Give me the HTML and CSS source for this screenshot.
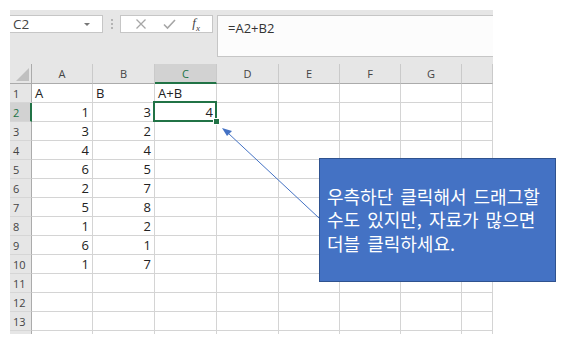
FILE: index.html
```html
<!DOCTYPE html>
<html lang="ko">
<head>
    <meta charset="UTF-8">
    <title>Excel fill handle</title>
    <link rel="stylesheet" href="styles.css">
</head>
<body>
<div class="page">
    <div class="excel">
        <div class="toolbar">
            <div class="namebox"><span>C2</span><span class="caret"></span></div>
            <div class="grip"><i></i><i></i><i></i></div>
            <div class="fxbox">
                <svg class="tool" width="12" height="12" viewBox="0 0 12 12"><path d="M1.5 1.5 L10.5 10.5 M10.5 1.5 L1.5 10.5" stroke="#a6a6a6" stroke-width="1.3"/></svg>
                <svg class="tool" width="13" height="12" viewBox="0 0 13 12"><path d="M1 6.5 L4.5 10 L12 2" stroke="#a6a6a6" stroke-width="1.6" fill="none"/></svg>
                <span class="fx">f<sub>x</sub></span>
            </div>
            <div class="formula">=A2+B2</div>
        </div>

        <div class="sheet">
            <div class="ch corner"></div>
            <div class="ch">A</div><div class="ch">B</div><div class="ch active">C</div><div class="ch">D</div>
            <div class="ch">E</div><div class="ch">F</div><div class="ch">G</div><div class="ch"></div>

            <div class="rh">1</div>
            <div class="c">A</div><div class="c">B</div><div class="c">A+B</div><div class="c"></div>
            <div class="c"></div><div class="c"></div><div class="c"></div><div class="c"></div>

            <div class="rh active">2</div>
            <div class="c num">1</div><div class="c num">3</div><div class="c num sel">4</div><div class="c"></div>
            <div class="c"></div><div class="c"></div><div class="c"></div><div class="c"></div>

            <div class="rh">3</div>
            <div class="c num">3</div><div class="c num">2</div><div class="c"></div><div class="c"></div>
            <div class="c"></div><div class="c"></div><div class="c"></div><div class="c"></div>

            <div class="rh">4</div>
            <div class="c num">4</div><div class="c num">4</div><div class="c"></div><div class="c"></div>
            <div class="c"></div><div class="c"></div><div class="c"></div><div class="c"></div>

            <div class="rh">5</div>
            <div class="c num">6</div><div class="c num">5</div><div class="c"></div><div class="c"></div>
            <div class="c"></div><div class="c"></div><div class="c"></div><div class="c"></div>

            <div class="rh">6</div>
            <div class="c num">2</div><div class="c num">7</div><div class="c"></div><div class="c"></div>
            <div class="c"></div><div class="c"></div><div class="c"></div><div class="c"></div>

            <div class="rh">7</div>
            <div class="c num">5</div><div class="c num">8</div><div class="c"></div><div class="c"></div>
            <div class="c"></div><div class="c"></div><div class="c"></div><div class="c"></div>

            <div class="rh">8</div>
            <div class="c num">1</div><div class="c num">2</div><div class="c"></div><div class="c"></div>
            <div class="c"></div><div class="c"></div><div class="c"></div><div class="c"></div>

            <div class="rh">9</div>
            <div class="c num">6</div><div class="c num">1</div><div class="c"></div><div class="c"></div>
            <div class="c"></div><div class="c"></div><div class="c"></div><div class="c"></div>

            <div class="rh">10</div>
            <div class="c num">1</div><div class="c num">7</div><div class="c"></div><div class="c"></div>
            <div class="c"></div><div class="c"></div><div class="c"></div><div class="c"></div>

            <div class="rh">11</div>
            <div class="c"></div><div class="c"></div><div class="c"></div><div class="c"></div>
            <div class="c"></div><div class="c"></div><div class="c"></div><div class="c"></div>

            <div class="rh">12</div>
            <div class="c"></div><div class="c"></div><div class="c"></div><div class="c"></div>
            <div class="c"></div><div class="c"></div><div class="c"></div><div class="c"></div>

            <div class="rh">13</div>
            <div class="c"></div><div class="c"></div><div class="c"></div><div class="c"></div>
            <div class="c"></div><div class="c"></div><div class="c"></div><div class="c"></div>

            <div class="rh cut"></div>
            <div class="c cut"></div><div class="c cut"></div><div class="c cut"></div><div class="c cut"></div>
            <div class="c cut"></div><div class="c cut"></div><div class="c cut"></div><div class="c cut"></div>
        </div>
    </div>

    <svg class="arrow" width="575" height="346" viewBox="0 0 575 346">
        <line x1="319" y1="218" x2="228" y2="133" stroke="#4472c4" stroke-width="1"/>
        <polygon points="222,128 232,131 227,136" fill="#4472c4"/>
    </svg>

    <div class="callout">
        <p>우측하단 클릭해서 드래그할<br>수도 있지만, 자료가 많으면<br>더블 클릭하세요.</p>
    </div>
</div>
</body>
</html>
```

FILE: styles.css
```css
body {
    margin: 0;
    background: white;
    font-family: "Open Sans", "Noto Sans", sans-serif;
}
.page {
    position: relative;
    width: 575px;
    height: 346px;
    overflow: hidden;
}
.excel {
    margin: 10px 0 0 10px;
    width: 483px;
}

/* formula bar */
.toolbar {
    display: flex;
    align-items: flex-start;
    height: 54px;
    padding-top: 5px;
    box-sizing: border-box;
    background: #e6e6e6;
}
.namebox {
    display: flex;
    align-items: center;
    justify-content: space-between;
    width: 93px;
    height: 18px;
    box-sizing: border-box;
    padding: 0 12px 0 3px;
    background: white;
    border: 1px solid #c6c6c6;
    border-left: none;
    font-size: 13.5px;
    color: #444;
}
.caret {
    width: 0;
    height: 0;
    border-left: 3px solid transparent;
    border-right: 3px solid transparent;
    border-top: 3px solid #777;
}
.grip {
    display: flex;
    flex-direction: column;
    align-items: center;
    gap: 2px;
    width: 17px;
    padding-top: 4px;
}
.grip i {
    width: 2px;
    height: 2px;
    background: #b4b4b4;
}
.fxbox {
    display: flex;
    align-items: center;
    justify-content: space-around;
    width: 93px;
    height: 18px;
    box-sizing: border-box;
    padding: 0 4px 0 6px;
    background: white;
    border: 1px solid #c6c6c6;
}
.fx {
    font-family: "Liberation Serif", serif;
    font-style: italic;
    font-size: 13px;
    color: #444;
}
.fx sub {
    font-size: 9px;
}
.formula {
    margin-left: 4px;
    flex: 1;
    height: 42px;
    box-sizing: border-box;
    padding: 3px 10px;
    background: #fcfcfc;
    border: 1px solid #c6c6c6;
    border-right: none;
    font-size: 13px;
    color: #333;
}

/* grid */
.sheet {
    display: grid;
    grid-template-columns: 22px 61px 62px 62px 62px 61px 61px 61px 31px;
    grid-template-rows: 20px repeat(13, 19px) 3px;
    font-size: 13px;
    color: #222;
}
.ch {
    background: #e6e6e6;
    border-right: 1px solid #cacaca;
    border-bottom: 1px solid #ababab;
    text-align: center;
    font-size: 11px;
    line-height: 20px;
    color: #444;
}
.ch.active {
    background: #d2d2d2;
    border-bottom: 2px solid #217346;
    color: #217346;
}
.corner {
    position: relative;
    border-right-color: #ababab;
}
.corner::after {
    content: "";
    position: absolute;
    right: 2px;
    bottom: 2px;
    border-left: 13px solid transparent;
    border-bottom: 13px solid #c0c0c0;
}
.rh {
    background: #e6e6e6;
    border-right: 1px solid #ababab;
    border-bottom: 1px solid #d6d6d6;
    padding-left: 3px;
    font-size: 11px;
    line-height: 19px;
    color: #444;
}
.rh.active {
    background: #d2d2d2;
    border-right: 2px solid #217346;
    color: #217346;
}
.c {
    border-right: 1px solid #d4d4d4;
    border-bottom: 1px solid #d4d4d4;
    padding: 0 3px;
    line-height: 18px;
    white-space: nowrap;
}
.num {
    text-align: right;
}
.cut {
    border-bottom: none;
}
.sel {
    position: relative;
}
.sel::after {
    content: "";
    position: absolute;
    left: -2px;
    top: -2px;
    right: -1px;
    bottom: -1px;
    border: 2px solid #217346;
}
.sel::before {
    content: "";
    position: absolute;
    right: -4px;
    bottom: -4px;
    width: 5px;
    height: 5px;
    background: #217346;
    border: 1px solid white;
    z-index: 2;
}

/* note */
.arrow {
    position: absolute;
    left: 0;
    top: 0;
}
.callout {
    position: absolute;
    left: 319px;
    top: 158px;
    width: 237px;
    height: 124px;
    box-sizing: border-box;
    display: flex;
    align-items: center;
    padding: 0 7px;
    background: #4472c4;
    border: 1.5px solid #2f528f;
}
.callout p {
    margin: 0;
    font-family: "Noto Sans CJK KR", sans-serif;
    font-size: 18px;
    word-spacing: 2px;
    line-height: 23.5px;
    color: white;
    white-space: nowrap;
}
```
